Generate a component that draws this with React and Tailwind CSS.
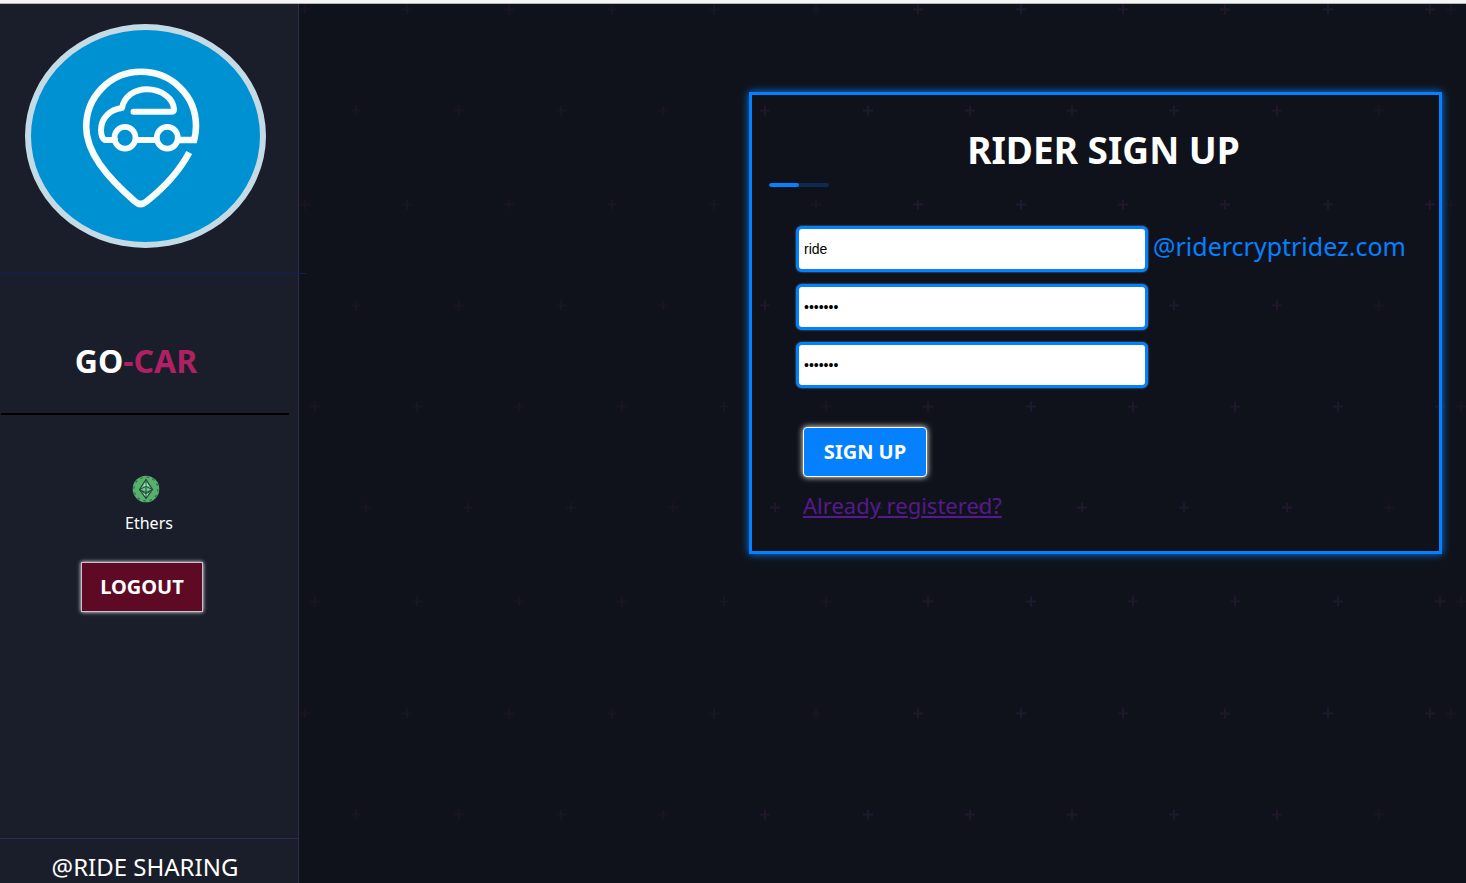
import React from "react";

const WIDE_A = [304, 406, 508, 611, 713, 815, 917, 1020, 1122, 1224, 1327, 1429, 1450];
const WIDE_B = [314, 416, 518, 621, 723, 825, 927, 1030, 1132, 1234, 1337, 1439, 1460];
const SHORT_A = [355, 458, 560, 662, 764, 867, 969, 1071, 1173, 1276, 1378];
const SHORT_B = [365, 467, 570, 672, 774, 876, 979, 1081, 1183, 1286, 1388];

const CROSS_ROWS = [
  { y: 9, xs: WIDE_A, blue: 1 },
  { y: 110, xs: SHORT_A, blue: 2 },
  { y: 204, xs: WIDE_A, blue: 1 },
  { y: 305, xs: SHORT_A, blue: 2 },
  { y: 406, xs: WIDE_B, blue: 1 },
  { y: 507, xs: SHORT_B, blue: 2 },
  { y: 601, xs: WIDE_B, blue: 1 },
  { y: 713, xs: WIDE_A, blue: 1 },
  { y: 814, xs: SHORT_A, blue: 2 },
];

function crossColor(x, isBlue) {
  const dim = x < 750 || (x > 810 && x < 830) || x > 1445 || (x > 1375 && x < 1392);
  if (dim) return isBlue ? "#151722" : "#19141f";
  return isBlue ? "#1a1b2e" : "#21172c";
}

function CrossField() {
  return (
    <svg aria-hidden="true" className="pointer-events-none absolute top-0 left-0" width="1466" height="883">
      {CROSS_ROWS.map((row) =>
        row.xs.map((x, i) => (
          <path
            key={`${row.y}-${x}`}
            d={`M${x - 4} ${row.y + 0.5}h10M${x + 1} ${row.y - 4.5}v10`}
            stroke={crossColor(x, i % 3 === row.blue)}
            strokeWidth="2"
          />
        ))
      )}
    </svg>
  );
}

function CarPinLogo() {
  return (
    <svg viewBox="31 30 229 212" className="h-full w-full" fill="none" stroke="#f8fcfa" role="img" aria-label="Go-Car">
      <path
        strokeWidth="6.6"
        d="M179 140H194.2Q196 133 196 126C196 95 171 71.8 141 71.8C110 71.8 86.2 97 86.2 127C86.2 152 106 176 135 201.5Q140.500 206.500 146.500 201.500C166 186 180 170 189.200 152.500"
      />
      <path
        strokeWidth="6"
        strokeLinecap="round"
        strokeLinejoin="round"
        d="M115 140H105Q101 138 101 130C101 118 110 109.500 122 108C124 97 134 89.200 147 89.200C162 89.200 173.500 99 174 109Q174 111.800 171.500 111.800H133.500"
      />
      <path strokeWidth="6" d="M136 140H156" />
      <ellipse cx="125" cy="137.700" rx="10.500" ry="10.900" strokeWidth="5.800" />
      <ellipse cx="167.300" cy="137.700" rx="10.500" ry="10.900" strokeWidth="5.800" />
    </svg>
  );
}

function EtherIcon() {
  return (
    <svg viewBox="0 0 28 28" className="h-7 w-7" fill="none" aria-hidden="true">
      <circle cx="14" cy="14" r="13.300" fill="#57b06b" />
      <circle cx="14" cy="14" r="12" stroke="#2f6b4c" strokeWidth="1.200" strokeDasharray="2.600 3.680" />
      <path d="M14 4.500L20.500 14.500L14 23.500L7.500 14.500Z" fill="#6fc98a" stroke="#24493b" strokeWidth="1.200" />
      <path d="M7.500 14.500L14 11.500L20.500 14.500L14 17.500ZM14 4.500V23.500M9.500 16L14 19L18.500 16" stroke="#24493b" strokeWidth="1" />
      <path d="M11.500 10.500L13.300 8V11.200ZM14.700 8L16.500 10.500L14.700 11.200ZM11.500 18.500L13.300 19V21ZM14.700 19L16.500 18.500L14.700 21Z" fill="#a5f0bd" />
    </svg>
  );
}

const fieldClass =
  "h-[46px] w-[352px] rounded-md border-[3px] border-[#0580ff] bg-white px-[5px] font-['Liberation_Sans',sans-serif] text-sm text-black shadow-[0_0_2px_#5b8fe0] outline-none";

export default function App() {
  return (
    <div className="flex h-screen flex-col overflow-hidden bg-[#0f121a] font-['Noto_Sans',sans-serif] text-white">
      <div className="h-1 shrink-0 border-b border-[#b5b5b5] bg-[#f5f5f5]" />
      <CrossField />
      <div className="flex min-h-0 flex-1">
        <aside className="relative flex w-[299px] shrink-0 flex-col border-r border-[#2e2e4a] bg-[#1a1d2a]">
          <div className="px-[25px] pt-5">
            <div className="h-56 w-[241px] overflow-hidden rounded-[50%] border-[6px] border-[#c4dae4] bg-[#0091d2]">
              <CarPinLogo />
            </div>
          </div>
          <hr className="mt-[25px] -mr-2 border-[#141c5c]" />
          <h1 className="mt-16 pr-[26px] text-center text-[32px] leading-[46px] font-bold">
            GO<span className="text-[#b02164]">-CAR</span>
          </h1>
          <hr className="mt-[29px] mr-[9px] ml-px border-t-2 border-black" />
          <div className="mt-[60px] flex flex-col items-center pr-1.5">
            <EtherIcon />
            <span className="mt-2 pl-1.5 text-base leading-6">Ethers</span>
          </div>
          <div className="mt-[27px] flex justify-center pr-[14px]">
            <button
              type="button"
              className="h-[50px] w-[122px] border border-[#c9c3cb] bg-[#5e0a24] text-xl font-bold shadow-[0_0_4px_#ffffff]"
            >
              LOGOUT
            </button>
          </div>
          <footer className="mt-auto h-[45px] border-t border-[#2e2e4a] pt-3 pr-2 text-center text-2xl leading-8">
            @RIDE SHARING
          </footer>
        </aside>

        <main className="relative flex flex-1 items-start justify-end px-6 pt-[88px]">
          <section className="w-[693px] border-[3px] border-[#0580ff] px-[17px] pt-7 pb-7 shadow-[0_0_8px_#0580ff]">
            <h2 className="pl-4 text-center text-[37px] leading-[54px] font-bold">RIDER SIGN UP</h2>
            <div className="mt-1.5 h-1 w-[60px] overflow-hidden rounded-full bg-[#0d2a50]">
              <div className="h-full w-1/2 rounded-full bg-[#0580ff]" />
            </div>
            <form className="mt-[39px] pl-[27px]" onSubmit={(e) => e.preventDefault()}>
              <div className="flex flex-col gap-3">
                <div className="flex items-start gap-[5px]">
                  <input id="rider" aria-label="Rider name" type="text" defaultValue="ride" className={fieldClass} />
                  <label htmlFor="rider" className="text-[25px] leading-10 text-[#0580ff]">
                    @ridercryptridez.com
                  </label>
                </div>
                <input aria-label="Password" type="password" defaultValue="rider12" className={fieldClass} />
                <input aria-label="Confirm password" type="password" defaultValue="rider12" className={fieldClass} />
              </div>
              <div className="flex flex-col items-start pt-[39px] pl-[7px]">
                <button
                  type="submit"
                  className="h-[50px] w-[124px] rounded-sm border border-white bg-[#0580ff] text-xl font-bold shadow-[0_0_6px_#ffffff]"
                >
                  SIGN UP
                </button>
                <a href="#login" className="mt-2.5 text-[22px] leading-9 text-[#551a8b] underline">
                  Already registered?
                </a>
              </div>
            </form>
          </section>
        </main>
      </div>
    </div>
  );
}
